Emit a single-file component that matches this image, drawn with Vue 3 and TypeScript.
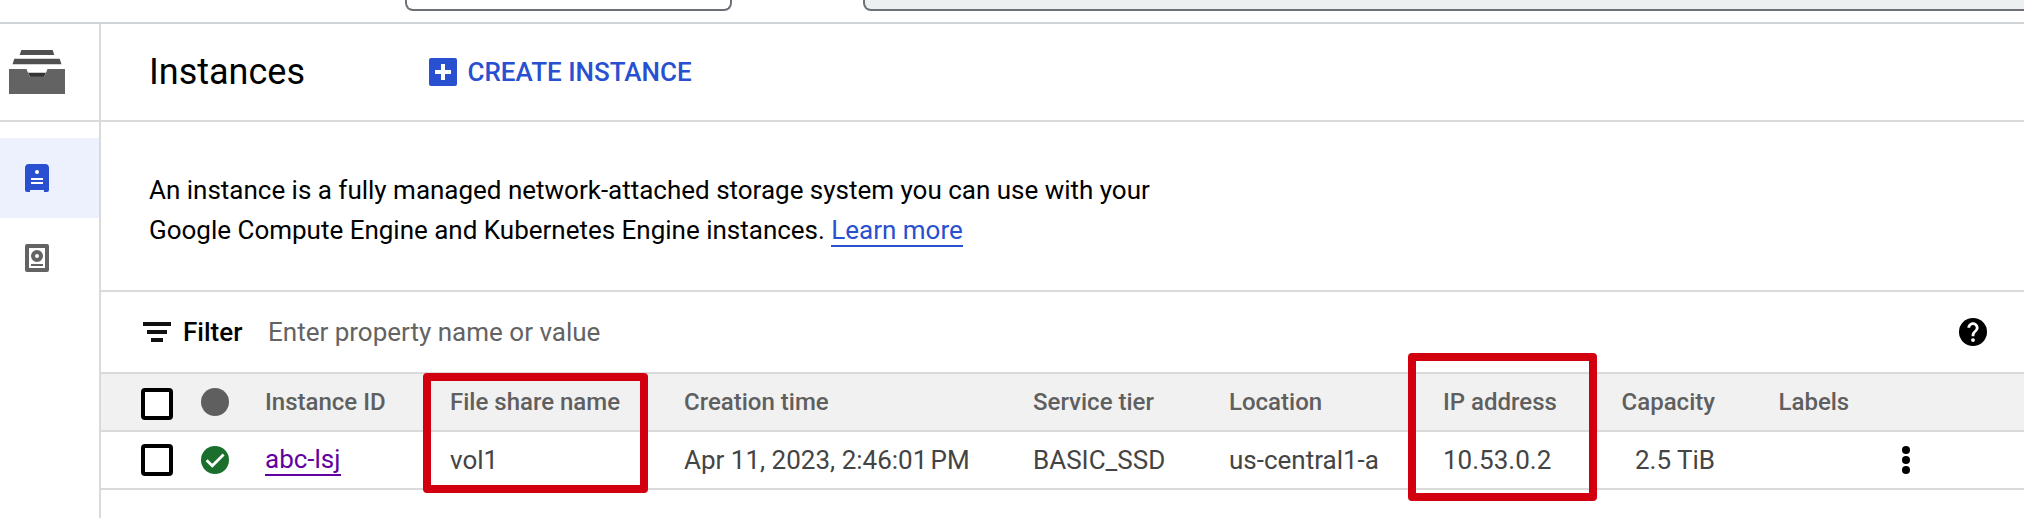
<script setup lang="ts">
interface Column {
  key: string
  label: string
}

interface Instance {
  id: string
  share: string
  created: string
  tier: string
  location: string
  ip: string
  capacity: string
  labels: string
}

const columns: Column[] = [
  { key: 'id', label: 'Instance ID' },
  { key: 'share', label: 'File share name' },
  { key: 'created', label: 'Creation time' },
  { key: 'tier', label: 'Service tier' },
  { key: 'location', label: 'Location' },
  { key: 'ip', label: 'IP address' },
  { key: 'capacity', label: 'Capacity' },
  { key: 'labels', label: 'Labels' },
]

const instances: Instance[] = [
  {
    id: 'abc-lsj',
    share: 'vol1',
    created: 'Apr 11, 2023, 2:46:01\u202fPM',
    tier: 'BASIC_SSD',
    location: 'us-central1-a',
    ip: '10.53.0.2',
    capacity: '2.5 TiB',
    labels: '',
  },
]
</script>

<template>
  <div class="app">
    <div class="topbar">
      <div class="project-picker"></div>
      <div class="search"></div>
    </div>
    <div class="body">
      <nav class="rail">
        <div class="product">
          <svg width="56" height="44" viewBox="0 0 56 44">
            <path d="M12.3 0h31.4l1.6 5H10.7z" fill="#505050" />
            <path d="M5.3 8.8h45.4l1.8 5.5h-49z" fill="#505050" />
            <path d="M19 22.8h18l-2 4.200H21z" fill="#333" />
            <path d="M0 19h17.5l3 7.500h15l3-7.500H56v25H0z" fill="#636363" />
          </svg>
        </div>
        <a class="nav-item active">
          <svg width="24" height="28" viewBox="0 0 24 28">
            <path d="M4 0h16a4 4 0 0 1 4 4v22a2 2 0 0 1-2 2h-3v-2H5v2H2a2 2 0 0 1-2-2V4a4 4 0 0 1 4-4z" fill="#2850d0" />
            <circle cx="12" cy="8" r="2" fill="#fff" />
            <path d="M6 14h12v2H6zM6 18h12v2H6z" fill="#fff" />
          </svg>
        </a>
        <a class="nav-item">
          <svg width="24" height="28" viewBox="0 0 24 28">
            <path fill-rule="evenodd" d="M2 0h20a2 2 0 0 1 2 2v24a2 2 0 0 1-2 2H2a2 2 0 0 1-2-2V2a2 2 0 0 1 2-2zM4 4v20h16V4z" fill="#636363" />
            <circle cx="12" cy="12" r="4" fill="none" stroke="#636363" stroke-width="4" />
            <path d="M6 20h12v2H6z" fill="#636363" />
          </svg>
        </a>
      </nav>
      <main class="main">
        <header class="page-header">
          <h1>Instances</h1>
          <button class="create">
            <svg width="28" height="28" viewBox="0 0 28 28">
              <rect width="28" height="28" rx="2" fill="#2850d0" />
              <path d="M12 6h4v6h6v4h-6v6h-4v-6H6v-4h6z" fill="#fff" />
            </svg>
            <span>CREATE INSTANCE</span>
          </button>
        </header>
        <p class="intro">
          An instance is a fully managed network-attached storage system you can use with your<br />
          Google Compute Engine and Kubernetes Engine instances. <a class="learn">Learn more</a>
        </p>
        <div class="filter">
          <svg class="filter-icon" width="28" height="20" viewBox="0 0 28 20">
            <path d="M0 0h28v4H0zM4 8h20v4H4zM8 16h12v4H8z" fill="#111" />
          </svg>
          <span class="filter-label">Filter</span>
          <span class="filter-hint">Enter property name or value</span>
          <svg class="help" width="28" height="28" viewBox="2 2 20 20">
            <circle cx="12" cy="12" r="10" fill="#000" />
            <path d="M15.07 11.25l-.9.92C13.45 12.9 13 13.5 13 15h-2v-.5c0-1.1.45-2.1 1.17-2.83l1.24-1.26c.37-.36.59-.86.59-1.41 0-1.1-.9-2-2-2s-2 .9-2 2H8c0-2.21 1.79-4 4-4s4 1.79 4 4c0 .88-.36 1.68-.93 2.25z" fill="#fff" />
            <circle cx="12" cy="17.800" r="1.400" fill="#fff" />
          </svg>
        </div>
        <div class="table">
          <div class="row head">
            <span class="check"></span>
            <span class="dot"></span>
            <span v-for="c in columns" :key="c.key" :class="['cell', c.key]">{{ c.label }}</span>
          </div>
          <div v-for="r in instances" :key="r.id" class="row">
            <span class="check"></span>
            <svg class="ok" width="28" height="28" viewBox="0 0 28 28">
              <circle cx="14" cy="14" r="14" fill="#196f2b" />
              <path d="M5.600 14.200l5.700 5.600L22.600 8.400" fill="none" stroke="#fff" stroke-width="2.800" />
            </svg>
            <span class="cell id"><a class="link">{{ r.id }}</a></span>
            <span class="cell share">{{ r.share }}</span>
            <span class="cell created">{{ r.created }}</span>
            <span class="cell tier">{{ r.tier }}</span>
            <span class="cell location">{{ r.location }}</span>
            <span class="cell ip">{{ r.ip }}</span>
            <span class="cell capacity">{{ r.capacity }}</span>
            <span class="cell labels">{{ r.labels }}</span>
            <svg class="more" width="8" height="28" viewBox="0 0 8 28">
              <circle cx="4" cy="4" r="4" />
              <circle cx="4" cy="14" r="4" />
              <circle cx="4" cy="24" r="4" />
            </svg>
          </div>
          <div class="highlight share-highlight"></div>
          <div class="highlight ip-highlight"></div>
        </div>
      </main>
    </div>
  </div>
</template>

<style>
body {
  margin: 0;
  background: #fff;
}
</style>

<style scoped>
* {
  box-sizing: border-box;
}
.app {
  width: 2024px;
  height: 518px;
  overflow: hidden;
  display: flex;
  flex-direction: column;
  background: #fff;
  font-family: Roboto, 'Liberation Sans', sans-serif;
  font-size: 26px;
  color: #000;
}
.topbar {
  height: 24px;
  flex: none;
  display: flex;
  padding-left: 405px;
  border-bottom: 2px solid #d0d3d7;
}
.project-picker,
.search {
  height: 11px;
  flex: none;
  border: 2px solid #6d7076;
  border-top: 0;
  border-radius: 0 0 8px 8px;
}
.project-picker {
  width: 327px;
  margin-right: 131px;
}
.search {
  width: 1200px;
  background: #ecf0f1;
}
.body {
  flex: 1;
  display: flex;
  min-height: 0;
}
.rail {
  width: 101px;
  flex: none;
  border-right: 2px solid #dadada;
}
.product {
  height: 98px;
  margin-bottom: 16px;
  padding: 26px 0 0 9px;
  border-bottom: 2px solid #dadada;
}
.product svg,
.nav-item svg {
  display: block;
}
.nav-item {
  display: block;
  height: 80px;
  padding: 26px 0 0 25px;
}
.nav-item.active {
  background: #edf1fe;
}
.main {
  flex: 1;
  min-width: 0;
}
.page-header {
  height: 98px;
  display: flex;
  align-items: center;
  border-bottom: 2px solid #dadada;
  padding-left: 48px;
}
h1 {
  margin: 0;
  width: 280px;
  font-size: 36px;
  font-weight: 400;
  line-height: 48px;
}
.create {
  display: flex;
  align-items: center;
  gap: 10.5px;
  padding: 0;
  border: 0;
  background: none;
  color: #2850d0;
  font: 500 26px/40px Roboto, 'Liberation Sans', sans-serif;
}
.intro {
  margin: 0;
  height: 170px;
  padding: 48px 0 0 48px;
  line-height: 40px;
  letter-spacing: -0.008px;
  border-bottom: 2px solid #dadada;
}
.learn {
  display: inline-block;
  line-height: 30px;
  color: #2850d0;
  border-bottom: 2px solid #2850d0;
}
.filter {
  height: 80px;
  display: flex;
  align-items: center;
  padding: 0 37px 0 42px;
}
.filter-label {
  width: 85px;
  margin-left: 12px;
  font-weight: 500;
}
.filter-hint {
  flex: 1;
  color: #636363;
}
.table {
  position: relative;
}
.row {
  height: 58px;
  display: grid;
  grid-template-columns: 60px 64px 185px 234px 349px 196px 214px 171px 101px 187px 1fr;
  align-items: center;
  padding-left: 40px;
  border-bottom: 2px solid #dadada;
  color: #444;
}
.row.head {
  height: 60px;
  border-top: 2px solid #dadada;
  background: #f1f1f1;
  color: #5f5f5f;
  font-size: 24px;
  font-weight: 500;
}
.check {
  width: 32px;
  height: 32px;
  border: 4px solid #000;
  border-radius: 4px;
  background: #fff;
}
.head .check {
  margin-top: 4px;
}
.dot {
  width: 28px;
  height: 28px;
  border-radius: 50%;
  background: #5f5f5f;
}
.cell {
  white-space: nowrap;
}
.labels {
  padding-left: 63.5px;
}
.capacity {
  justify-self: end;
}
.link {
  display: inline-block;
  line-height: 30px;
  color: #6200a0;
  border-bottom: 2px solid #6200a0;
}
.highlight {
  position: absolute;
  border: 8px solid #d2000f;
  border-radius: 4px;
}
.share-highlight {
  left: 322px;
  top: 1px;
  width: 225px;
  height: 120px;
}
.ip-highlight {
  left: 1307px;
  top: -19px;
  width: 189px;
  height: 148px;
}
</style>
